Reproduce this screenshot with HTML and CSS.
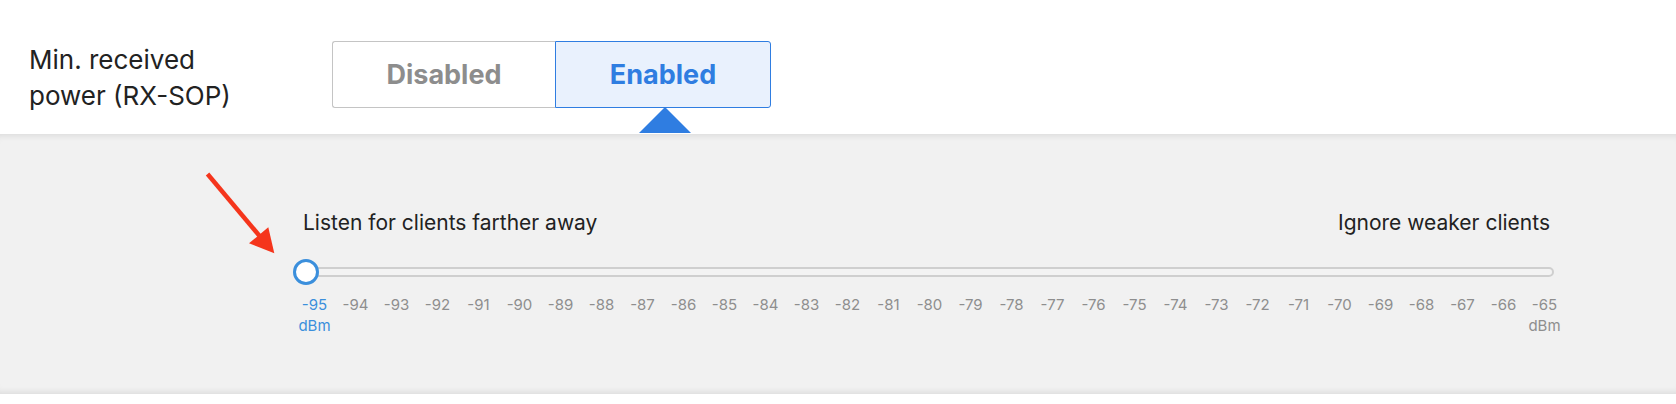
FILE: index.html
```html
<!DOCTYPE html>
<html>
<head>
<meta charset="utf-8">
<link rel="stylesheet" href="styles.css">
</head>
<body>
<div class="row">
  <div class="label">Min. received<br>power (RX-SOP)</div>
  <div class="toggle">
    <div class="opt opt-off">Disabled</div>
    <div class="opt opt-on">Enabled<span class="caret"></span></div>
  </div>
</div>
<div class="panel">
  <svg class="arrow" width="85" height="100" viewBox="0 0 85 100">
    <line x1="9" y1="15.7" x2="60" y2="76.5" stroke="#f5351c" stroke-width="4.5" stroke-linecap="square"/>
    <polygon points="74.3,93.3 49,83.3 68.3,67.3" fill="#f5351c"/>
  </svg>
  <div class="slider">
    <div class="ends">
      <span>Listen for clients farther away</span>
      <span>Ignore weaker clients</span>
    </div>
    <div class="track-row">
      <div class="track"></div>
      <div class="thumb"></div>
    </div>
    <div class="ticks">
      <span class="tick sel">-95<br>dBm</span>
      <span class="tick">-94</span><span class="tick">-93</span><span class="tick">-92</span><span class="tick">-91</span><span class="tick">-90</span>
      <span class="tick">-89</span><span class="tick">-88</span><span class="tick">-87</span><span class="tick">-86</span><span class="tick">-85</span>
      <span class="tick">-84</span><span class="tick">-83</span><span class="tick">-82</span><span class="tick">-81</span><span class="tick">-80</span>
      <span class="tick">-79</span><span class="tick">-78</span><span class="tick">-77</span><span class="tick">-76</span><span class="tick">-75</span>
      <span class="tick">-74</span><span class="tick">-73</span><span class="tick">-72</span><span class="tick">-71</span><span class="tick">-70</span>
      <span class="tick">-69</span><span class="tick">-68</span><span class="tick">-67</span><span class="tick">-66</span>
      <span class="tick">-65<br>dBm</span>
    </div>
  </div>
</div>
</body>
</html>
```
FILE: styles.css
```css
* { box-sizing: border-box; }
html, body { margin: 0; padding: 0; background: #fff; }
body {
  font-family: Inter, "Noto Sans", "Liberation Sans", sans-serif;
  color: #222;
}
.row {
  display: flex;
  align-items: flex-start;
  height: 134px;
  padding: 41px 0 0 29px;
}
.label {
  flex: 0 0 303px;
  margin-top: 1px;
  font-size: 26px;
  line-height: 36px;
  color: #222;
}
.toggle {
  display: flex;
}
.opt {
  position: relative;
  height: 67px;
  display: flex;
  align-items: center;
  justify-content: center;
  font-size: 27px;
  font-weight: 700;
}
.opt-off {
  width: 223px;
  border: 1.5px solid #c4c4c4;
  border-right: none;
  border-radius: 3px 0 0 3px;
  color: #8d8d8d;
  background: #fff;
}
.opt-on {
  width: 216px;
  border: 1.5px solid #2f7de1;
  border-radius: 0 3px 3px 0;
  color: #2f7de1;
  background: #e9f1fd;
}
.caret {
  position: absolute;
  top: 100%;
  left: 50%;
  margin-left: -24px;
  width: 0;
  height: 0;
  border-left: 26px solid transparent;
  border-right: 26px solid transparent;
  border-bottom: 26px solid #2f7de1;
}
.panel {
  position: relative;
  height: 260px;
  background: #f1f1f1;
  box-shadow: inset 0 7px 6px -5px rgba(0,0,0,0.09), inset 0 -7px 6px -5px rgba(0,0,0,0.09);
  padding-top: 76px;
}
.arrow {
  position: absolute;
  left: 200px;
  top: 26px;
}
.slider {
  margin-left: 294px;
  width: 1271px;
}
.ends {
  display: flex;
  justify-content: space-between;
  padding: 0 15px 0 9px;
  font-size: 21px;
  line-height: 25px;
  color: #222;
}
.track-row {
  position: relative;
  height: 26px;
  margin-top: 24px;
  display: flex;
  align-items: center;
}
.track {
  margin-left: 6px;
  width: 1254px;
  height: 10px;
  border: 2px solid #cfcfcf;
  border-radius: 5px;
  background: #f3f3f3;
}
.thumb {
  position: absolute;
  left: -1px;
  top: 0;
  width: 26px;
  height: 26px;
  border: 3.5px solid #3b8fdc;
  border-radius: 50%;
  background: #fff;
}
.ticks {
  display: grid;
  grid-template-columns: repeat(31, 1fr);
  margin-top: 9px;
  font-size: 15px;
  line-height: 21px;
  color: #8e8e8e;
}
.tick {
  text-align: center;
  white-space: nowrap;
}
.tick.sel {
  color: #3b8fdc;
}
```
